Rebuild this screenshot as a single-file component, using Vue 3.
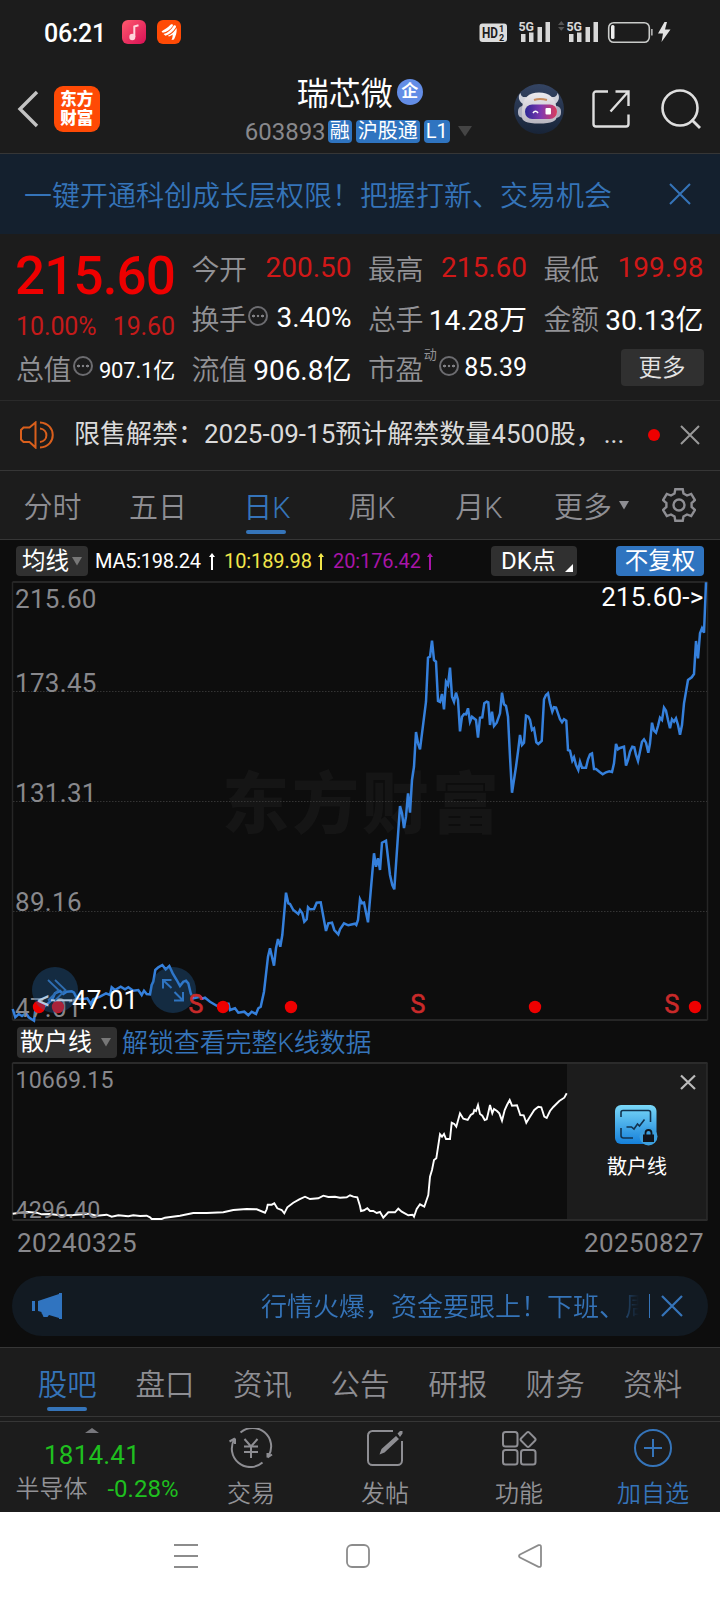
<script setup>
// Builds an SVG points string from coordinates in thirds of a pixel around an origin.
const trace = (ox, oy, coords) => {
  const out = []
  for (let i = 0; i < coords.length; i += 2) {
    out.push((ox + coords[i] / 3).toFixed(1) + ',' + (oy + coords[i + 1] / 3).toFixed(1))
  }
  return out.join(' ')
}

const price = [
  trace(0, 930, [38,237,46,262,56,252,66,258,78,250,86,262,102,272,106,240,120,222,135,228,150,215,158,205,165,190,180,183,190,192,200,185,215,184,222,188,230,205,245,208,262,205,272,222,280,208,300,200,318,190,330,195,335,172,345,180,362,170,375,178,385,172,400,182,415,180,425,195,432,182,440,192,450,193,455,165,460,155,466,120,475,112,487,105,497,118,508,108,518,130,530,150,540,168,550,155,558,152,565,160,572,190,580,205]),
  trace(200, 620, [0,1130,6,1136,15,1133,30,1145,50,1157,68,1165,82,1160,85,1148,90,1170,105,1165,115,1178,133,1175,145,1186,155,1175,168,1182,175,1165,182,1160,192,1115,204,1010,210,985,222,1037,228,985,234,957,241,980,247,945,258,818,265,850,270,852,280,870,295,882,300,870,307,880,313,905,320,898,324,862,330,868,342,867,350,848,362,847,378,933,385,910,396,908,403,930,415,943,420,928,432,910,445,916,465,911,469,915,474,900,480,838,486,850,492,848,504,907,522,700,528,740,534,715,540,750,546,668,558,662,570,765,577,795,583,808,600,558,606,580,612,624,618,590,624,520,630,578,636,480,642,440,648,336,654,370,660,388,678,245,684,113,690,110,696,62,702,120,708,125,714,243,720,246,726,222,732,268,738,185,744,195,750,143,756,230,762,245,768,218,774,240,780,334,786,290,792,282,798,283,804,265,810,305,816,290,828,300,834,353,840,293,847,292,853,250,860,245,865,247,870,315,876,275,882,318,890,308]),
  trace(440, 570, [180,430,186,368,192,403,198,408,204,440,210,560,216,668,228,590,234,545,240,495,246,525,252,518,258,437,265,440,270,450,276,480,282,475,289,517,295,522,305,513,312,388,318,375,324,370,330,400,337,425,342,412,348,413,360,448,366,457,372,448,379,452,384,540,390,542,397,572,402,562,408,585,415,600,420,575,426,593,438,593,444,568,450,553,456,550,462,597,468,597,480,607,488,613,498,607,508,604,516,606,522,580,528,522,534,538,540,534,552,530,558,587,564,570,570,545,577,530,583,532,588,555,594,573,606,515,612,508,618,518,625,548,630,520,636,458,642,482,648,488,654,468,660,443,666,450,672,413,678,422,684,450,690,475,696,448,702,455,708,445,714,465,720,494,726,465,732,400,744,330,755,322,762,312,768,213,774,265,780,190,786,175,792,188,798,37])
].join(' ')

const retail = [
  trace(0, 930, [38,851,60,848,85,846,110,848,125,853,150,852,180,856,220,855,265,851,290,857,320,854,335,860,355,856,385,859,400,856,420,858,440,857,450,862,455,867,485,867,495,863,540,857,580,849,620,849,670,847,700,840,740,837,770,838,795,848,800,838,803,824,815,824,823,820,832,835,845,840,853,850,862,832,880,818,898,808,915,800,930,807,955,805,970,797,985,801,1005,800,1020,803,1040,802,1050,796,1060,800,1072,802]),
  trace(360, 1030, [0,528,3,543,12,541,22,535,30,543,40,543,50,549,60,546,70,563,85,547,105,547,115,536,125,545,145,556,158,554,162,560,170,537,180,523,193,530,198,515,205,495,210,440,216,420,222,390,229,385,240,313,246,320,252,312,258,327,270,327,275,278,283,282,289,290,300,250,310,266,323,270,332,255,340,250,343,240,348,243,354,225,360,252,367,257,374,270,380,268,384,252,390,225,397,250,402,237,411,243,418,250,426,272,434,240,441,225,449,210,456,227,471,226,481,255,491,256,499,278,507,265,523,240,535,230,544,232,553,260,560,264,570,243,580,231,598,213,613,203,620,190])
].join(' ')

const scale = [
  { y: 607.5, t: '215.60' },
  { y: 692, t: '173.45' },
  { y: 802, t: '131.31' },
  { y: 911, t: '89.16' },
  { y: 1017, t: '47.01' }
]
const gridY = [691.5, 801.5, 911.5]
const events = [39, 58, 223, 291, 535, 695]
const signals = [196, 418, 672]
const sections = ['股吧', '盘口', '资讯', '公告', '研报', '财务', '资料']
</script>

<template>
  <div class="phone">
    <div class="status">
      <span class="clock">06:21</span>
      <svg class="app-a" width="24" height="24" viewBox="0 0 24 24">
        <defs><linearGradient id="music" x1="0" y1="0" x2="1" y2="1"><stop offset="0" stop-color="#ff5a6e" /><stop offset="1" stop-color="#d80f55" /></linearGradient></defs>
        <rect width="24" height="24" rx="6" fill="url(#music)" />
        <path d="M12.300 17V6.500l4.200-1.200" fill="none" stroke="#ffd5dc" stroke-width="2" />
        <ellipse cx="10.300" cy="17" rx="3" ry="3.200" fill="#ffd5dc" />
      </svg>
      <svg class="app-b" width="24" height="24" viewBox="0 0 24 24">
        <rect width="24" height="24" rx="6" fill="#ff4a05" />
        <path d="M4.500 11.500C7 9.500 11 8 13.500 4.800C15 3.800 16.500 4.500 15.800 6C13.500 9.500 9.500 12 5.800 12.800ZM6.500 14C10.500 13 14.500 10 16.800 5.500C18.500 4.800 19.500 6 18.800 7.500C16 12 12.500 14.500 8.500 15.800ZM11 15.800C14.500 14.500 17.500 11.500 19.500 8C20.300 12 18.500 16.500 17 19.500L14.500 20C15.500 18 15.800 16 15.500 14.500C14.500 15.600 13 16.300 11.800 16.600Z" fill="#fff" />
      </svg>
      <svg class="signals" width="200" height="30" viewBox="476 16 200 30">
        <rect x="479.500" y="23.500" width="27.500" height="18.500" rx="3" fill="#dcdcdc" />
        <text x="482" y="38" class="hd" textLength="16" lengthAdjust="spacingAndGlyphs">HD</text>
        <text x="499" y="32" class="hd-n">1</text><text x="499" y="41" class="hd-n">2</text>
        <g v-for="dx in [0, 48]" :key="dx" :transform="`translate(${dx} 0)`">
          <text x="518.500" y="31" class="g5" textLength="15.500" lengthAdjust="spacingAndGlyphs">5G</text>
          <path d="M521 34h4.500v8h-4.500zM529 32.500h4.500v9.500h-4.500zM537.500 27h4.500v15h-4.500zM545.500 22h4.500v20h-4.500z" fill="#d8d8d8" />
        </g>
        <path d="M558 25l3.300-4 3.300 4zM558 27l3.300 3.700 3.300-3.700z" fill="#555" />
        <rect x="608.700" y="22.700" width="40.600" height="19.600" rx="5" fill="none" stroke="#c9cbc9" stroke-width="1.600" />
        <rect x="611" y="25" width="3.500" height="14" rx="1.500" fill="#eee" />
        <rect x="651" y="29" width="1.700" height="6.500" fill="#aaa" />
        <path d="M664.500 22L658 33.500h5l-1.500 8.500 9-12.500h-5.500l2-7.500z" fill="#e2e2e2" />
      </svg>
    </div>

    <header class="header">
      <svg class="back" width="24" height="40" viewBox="0 0 24 40"><path d="M21 3L4 20l17 17" fill="none" stroke="#c2c2c2" stroke-width="3.400" /></svg>
      <div class="logo"><span>东方</span><span>财富</span></div>
      <div class="stock">
        <div class="name">瑞芯微<span class="corp">企</span></div>
        <div class="code">
          <span class="num">603893</span>
          <b class="rong">融</b><b class="hgt">沪股通</b><b class="lv">L1</b>
          <svg width="14" height="11" viewBox="0 0 14 11"><path d="M0 0h14L7 10.500z" fill="#444" /></svg>
        </div>
      </div>
      <svg class="robot" width="50" height="50" viewBox="0 0 50 50">
        <defs>
          <linearGradient id="disc" x1="0" y1="0" x2="0" y2="1"><stop offset="0" stop-color="#344463" /><stop offset="1" stop-color="#182438" /></linearGradient>
          <linearGradient id="visor"><stop offset="0" stop-color="#2b2794" /><stop offset=".5" stop-color="#8038b0" /><stop offset="1" stop-color="#dc3d5b" /></linearGradient>
          <linearGradient id="helmet" x1="0" y1="0" x2="0" y2="1"><stop offset="0" stop-color="#eceaee" /><stop offset="1" stop-color="#b9b6c0" /></linearGradient>
        </defs>
        <circle cx="25" cy="25" r="25" fill="url(#disc)" />
        <path d="M9 20C4 17 4 11 6.500 9C7 12.500 9 13.500 13 13ZM41 20C46 17 45.500 11 43.500 9C43 12.500 40 13.500 37 13Z" fill="#cfd1da" />
        <rect x="4" y="22" width="43" height="12" rx="5" fill="#aeb0bf" />
        <path d="M8 26C8 14 15 8.500 25 8.500S42.500 14 42.500 26V33C42.500 37 38 39.500 25 39.500S8 37 8 33Z" fill="url(#helmet)" />
        <rect x="11" y="20.500" width="32" height="14.500" rx="7.200" fill="url(#visor)" />
        <path d="M19 29q2.500-3.500 5 0" fill="none" stroke="#fff" stroke-width="1.600" />
        <rect x="31.500" y="24" width="5.500" height="6.500" rx="1" fill="#fff" />
        <path d="M20 16q6-2 13 0" stroke="#c88a5c" stroke-width="2" fill="none" />
      </svg>
      <svg class="share" width="40" height="40" viewBox="0 0 40 40"><path d="M17 2.500H5a2.500 2.500 0 0 0-2.500 2.500v30A2.500 2.500 0 0 0 5 37.500h30a2.500 2.500 0 0 0 2.500-2.500V25.500M24.500 2.500h13v14.500M37 3L19.500 22.500" fill="none" stroke="#dedede" stroke-width="2.400" /></svg>
      <svg class="search" width="42" height="42" viewBox="0 0 42 42"><circle cx="20" cy="20" r="17.500" fill="none" stroke="#dedede" stroke-width="2.600" /><path d="M31.500 31.500L40 40" stroke="#dedede" stroke-width="2.800" /></svg>
    </header>

    <div class="promo">
      <span>一键开通科创成长层权限！把握打新、交易机会</span>
      <svg width="22" height="22" viewBox="0 0 22 22"><path d="M1 1l20 20M21 1L1 21" stroke="#3574b9" stroke-width="2" /></svg>
    </div>

    <section class="quote">
      <div class="col first">
        <div class="price">215.60</div>
        <div class="delta"><span>10.00%</span><span>19.60</span></div>
        <div class="cell"><label>总值</label><i class="dots"></i><span class="val xs">907.1亿</span></div>
      </div>
      <div class="col">
        <div class="cell"><label>今开</label><span class="val up">200.50</span></div>
        <div class="cell"><label>换手</label><i class="dots"></i><span class="val">3.40%</span></div>
        <div class="cell"><label>流值</label><span class="val">906.8亿</span></div>
      </div>
      <div class="col">
        <div class="cell"><label>最高</label><span class="val up">215.60</span></div>
        <div class="cell"><label>总手</label><span class="val">14.28万</span></div>
        <div class="cell"><label>市盈</label><sup>动</sup><i class="dots"></i><span class="val sm">85.39</span></div>
      </div>
      <div class="col">
        <div class="cell"><label>最低</label><span class="val up">199.98</span></div>
        <div class="cell"><label>金额</label><span class="val">30.13亿</span></div>
        <div class="cell end"><button class="more">更多</button></div>
      </div>
    </section>

    <div class="notice">
      <svg width="34" height="28" viewBox="0 0 34 28" fill="none" stroke="#d95f1c" stroke-width="2"><path d="M15.500 1.500v25L9.500 21H3.500L1 18.500V9L3.500 6.500h6zM20 1.500c17 1 17 24 0 25M20 7.500c8.500 1 8.500 12.500 0 13.500" /></svg>
      <span class="txt">限售解禁：2025-09-15预计解禁数量4500股，<em>...</em></span>
      <span class="red"></span>
      <svg class="x" width="20" height="20" viewBox="0 0 20 20"><path d="M1 1l18 18M19 1L1 19" stroke="#999" stroke-width="2" /></svg>
    </div>

    <nav class="periods">
      <span>分时</span><span>五日</span><span class="on">日K</span><span>周K</span><span>月K</span>
      <span>更多<svg class="tri" width="10" height="9" viewBox="0 0 10 9"><path d="M0 0h10L5 8.500z" fill="#8e8e93" /></svg></span>
      <span><svg width="34" height="34" viewBox="-17 -17 34 34" fill="none" stroke="#8e8e93" stroke-width="2.400"><path d="M-3.700-15.700h7.400l.8 4.200 3.500 2 4.200-1.600 3.700 6.200-3.300 2.900v4l3.300 2.900-3.700 6.200-4.200-1.600-3.500 2-.8 4.200h-7.400l-.8-4.200-3.500-2-4.200 1.600-3.700-6.200 3.300-2.900v-4l-3.300-2.900 3.700-6.200 4.200 1.600 3.500-2z" /><circle r="5.500" /></svg></span>
    </nav>

    <main class="board">
      <div class="legend">
        <span class="chip ma">均线<svg width="10" height="9" viewBox="0 0 10 9"><path d="M0 0h10L5 8.500z" fill="#777" /></svg></span>
        <span class="m5">MA5:198.24</span>
        <svg class="ar" width="6" height="17" viewBox="0 0 6 17"><path d="M3 0L6 4H4v13H2V4H0z" fill="#fff" /></svg>
        <span class="m10">10:189.98</span>
        <svg class="ar" width="6" height="17" viewBox="0 0 6 17"><path d="M3 0L6 4H4v13H2V4H0z" fill="#f2e64a" /></svg>
        <span class="m20">20:176.42</span>
        <svg class="ar" width="6" height="17" viewBox="0 0 6 17"><path d="M3 0L6 4H4v13H2V4H0z" fill="#a815a8" /></svg>
        <span class="chip dk">DK点<svg width="8" height="8" viewBox="0 0 8 8"><path d="M8 0v8H0z" fill="#fff" /></svg></span>
        <span class="chip fq">不复权</span>
      </div>

      <svg class="plot" width="720" height="446" viewBox="0 578 720 446">
        <text x="222" y="828" class="mark" textLength="277">东方财富</text>
        <path d="M12.500 582H707.500M12.500 1020H707.500" stroke="#262626" stroke-width="2" />
        <path d="M12.500 582V1020M707.500 582V1020" stroke="#262626" stroke-width="1.500" />
        <path v-for="y in gridY" :key="y" :d="`M13 ${y}H707`" stroke="#343434" stroke-dasharray="1.500 1.500" />
        <polyline :points="price" fill="none" stroke="#3580dc" stroke-width="2.500" />
        <text v-for="s in scale" :key="s.t" x="15" :y="s.y" class="axis">{{ s.t }}</text>
        <text x="703.500" y="606" class="tag" text-anchor="end">215.60-&gt;</text>
        <circle v-for="x in events" :key="x" :cx="x" cy="1007" r="6.200" fill="#ee0000" />
        <text x="37" y="1008.500" class="tag">&lt;</text>
        <path d="M51 1000.300h21" stroke="#fff" stroke-width="2" />
        <text x="72" y="1008.500" class="tag">47.01</text>
        <circle cx="55" cy="990" r="23" fill="#2466a6" fill-opacity=".34" />
        <circle cx="173" cy="990" r="23" fill="#2466a6" fill-opacity=".34" />
        <path d="M48 980l10.500 10L48 1000.500M55 980l10.500 10L55 1000.500" fill="none" stroke="#2f6db0" stroke-width="1.800" />
        <path d="M163 988.500V980h8.500M163.500 980.500l8 7.500M183 992v8.500h-9M182.500 1000l-8-8" fill="none" stroke="#2f74c0" stroke-width="2" />
        <text v-for="x in signals" :key="x" :x="x" y="1012.500" class="sig" text-anchor="middle">S</text>
      </svg>

      <div class="sub-legend">
        <span class="chip">散户线<svg width="10" height="9" viewBox="0 0 10 9"><path d="M0 0h10L5 8.500z" fill="#777" /></svg></span>
        <span class="unlock">解锁查看完整K线数据</span>
      </div>

      <svg class="plot" width="720" height="164" viewBox="0 1060 720 164">
        <rect x="567" y="1063" width="140" height="157" fill="#1c1c1c" />
        <path d="M12.500 1063H707.500M12.500 1220H707.500" stroke="#2b2b2b" stroke-width="2" />
        <path d="M12.500 1063V1220M707 1063V1220" stroke="#2b2b2b" stroke-width="1.500" />
        <polyline :points="retail" fill="none" stroke="#fff" stroke-width="1.900" />
        <text x="15.500" y="1087.700" class="axis s">10669.15</text>
        <text x="15.500" y="1217.700" class="axis s">4296.40</text>
        <path d="M681 1075.500l14 13.500M695 1075.500L681 1089" stroke="#bbb" stroke-width="2.200" />
        <defs><linearGradient id="tile" x1="0" y1="0" x2="0" y2="1"><stop offset="0" stop-color="#7ad8f8" /><stop offset="1" stop-color="#1580da" /></linearGradient></defs>
        <rect x="615" y="1105" width="41.500" height="39" rx="6" fill="url(#tile)" />
        <path d="M621 1117v-4.500a2 2 0 0 1 2-2h25.500a2 2 0 0 1 2 2V1122M621 1128v7.500a2.500 2.500 0 0 0 2.500 2.500H633M626.500 1127h5l2.500 2 3.500-5 2 2 5-6.500" fill="none" stroke="#12334f" stroke-width="1.600" />
        <circle cx="648.500" cy="1136.500" r="9" fill="#3c9fdd" />
        <path d="M643 1134.500h11v7.500h-11z" fill="#10151c" />
        <path d="M645.500 1135v-2a3 3 0 0 1 6 0v2" fill="none" stroke="#10151c" stroke-width="1.800" />
        <text x="637" y="1174" class="lock" text-anchor="middle">散户线</text>
      </svg>

      <div class="dates"><span>20240325</span><span>20250827</span></div>

      <div class="ticker">
        <svg width="30" height="26" viewBox="0 0 30 26"><path d="M0 8h3v10H0zM6 8L27 1V0h3v26h-3v-1l-10-3-1.500 2h-4L10 20.500H9.500V19L6 18z" fill="#3074c0" /></svg>
        <span class="msg">行情火爆，资金要跟上！下班、周</span>
        <i class="bar"></i>
        <svg class="x" width="22" height="22" viewBox="0 0 22 22"><path d="M1 1l20 20M21 1L1 21" stroke="#3574b9" stroke-width="2.200" /></svg>
      </div>
    </main>

    <nav class="sections">
      <span v-for="(s, i) in sections" :key="s" :class="{ on: i === 0 }">{{ s }}</span>
    </nav>

    <footer class="actions">
      <div class="index">
        <svg width="14" height="5" viewBox="0 0 14 5"><path d="M0 5l7-5 7 5z" fill="#77777c" /></svg>
        <div class="pts">1814.41</div>
        <div class="ind"><span>半导体</span><b>-0.28%</b></div>
      </div>
      <div class="act">
        <svg width="44" height="40" viewBox="-22 -20 44 40" fill="none" stroke="#8e8e93" stroke-width="2"><path d="M-10.500-15.500A18.500 18.500 0 0 1 17.500 8M16.500 9.500l4.500-3M16.500 9.500V5M11.500 14.500A18.500 18.500 0 0 1-16.500-9M-16-9.500l-5.500 3M-16-9.500V-4" /><path d="M-6.500-9L0-1.500 6.500-9M0-1.500V10M-7-1.500H7M-7 4H7" /></svg>
        <span>交易</span>
      </div>
      <div class="act">
        <svg width="40" height="40" viewBox="-20 -20 40 40" fill="none" stroke="#8e8e93" stroke-width="2"><path d="M8-17H-12.500A4.500 4.500 0 0 0-17-12.500V12.500A4.500 4.500 0 0 0-12.500 17H12.500A4.500 4.500 0 0 0 17 12.500V-7" /><path d="M-5.500 6.500l2-5.500L11-12l3 3L-.5 4.500zM12.500-14.500l2.500-2.500h2.500v2.500L15-11z" fill="#8e8e93" stroke="none" /></svg>
        <span>发帖</span>
      </div>
      <div class="act">
        <svg width="40" height="40" viewBox="-20 -20 40 40" fill="none" stroke="#8e8e93" stroke-width="2"><rect x="-16" y="-16" width="14.500" height="14.500" rx="2.500" /><rect x="-16" y="2" width="14.500" height="14.500" rx="2.500" /><rect x="2" y="2" width="14.500" height="14.500" rx="2.500" /><rect x="3.300" y="-14.300" width="11.500" height="11.500" rx="1.800" transform="rotate(45 9 -8.500)" /></svg>
        <span>功能</span>
      </div>
      <div class="act blue">
        <svg width="40" height="40" viewBox="-20 -20 40 40" fill="none" stroke="#3574b9" stroke-width="2"><circle r="18" /><path d="M-9 0H9M0-9V9" /></svg>
        <span>加自选</span>
      </div>
    </footer>

    <div class="system">
      <svg width="24" height="24" viewBox="0 0 24 24"><path d="M0 1h24M0 12h24M0 23h24" stroke="#8c8c8c" stroke-width="2" /></svg>
      <svg width="24" height="24" viewBox="0 0 24 24"><rect x="1" y="1" width="22" height="22" rx="5" fill="none" stroke="#8c8c8c" stroke-width="1.800" /></svg>
      <svg width="24" height="24" viewBox="0 0 24 24"><path d="M2 10.500L20.500 1.200Q23 .5 23 3v18q0 2.500-2.500 1.800L2 13.500q-2-1.500 0-3z" fill="none" stroke="#8c8c8c" stroke-width="1.800" /></svg>
    </div>
  </div>
</template>

<style>
body { margin: 0; background: #1c1c1c; }
</style>

<style scoped>
.phone { width: 720px; height: 1600px; overflow: hidden; background: #1c1c1c; color: #fff; font-family: Roboto, "Noto Sans CJK SC", sans-serif; display: flex; flex-direction: column; white-space: nowrap; }
.phone > * { box-sizing: border-box; flex: none; }
svg { display: block; flex: none; }
i, em { font-style: normal; }

.status { height: 64px; display: flex; align-items: center; padding-left: 44px; }
.clock { width: 78px; font-size: 25px; font-weight: 500; letter-spacing: -.3px; line-height: 64px; padding-top: 2px; box-sizing: border-box; height: 64px; }
.app-b { margin-left: 11px; }
.signals { margin: -2px 0 0 295px; }
.hd { font: 700 14px Roboto; fill: #1c1c1c; }
.hd-n { font: 700 9px Roboto; fill: #1c1c1c; }
.g5 { font: 700 13px Roboto; fill: #d8d8d8; }

.header { height: 90px; border-bottom: 1px solid #363636; display: flex; align-items: center; padding: 0 18px 0 16px; }
.logo { width: 46px; height: 46px; border-radius: 9px; background: #ff4a05; margin-left: 14px; display: flex; flex-direction: column; align-items: center; justify-content: center; padding-top: 1px; box-sizing: border-box; }
.logo span { font-size: 16.500px; line-height: 19.500px; font-weight: 900; }
.stock { margin-left: 145px; width: 230px; height: 76px; padding-top: 6px; display: flex; flex-direction: column; }
.name { display: flex; align-items: center; height: 40px; font-size: 32px; line-height: 40px; padding-left: 52px; }
.corp { width: 26px; height: 26px; border-radius: 50%; background: #638de6; font-size: 17px; line-height: 25px; font-weight: 700; text-align: center; margin: -3px 0 0 4px; }
.code { display: flex; align-items: center; height: 36px; gap: 4px; }
.code .num { font-size: 24px; color: #88888c; width: 79px; }
.code b { height: 23px; line-height: 22px; border-radius: 4px; background: #2f74c0; font-size: 20px; font-weight: 400; text-align: center; }
.rong { width: 24px; }
.hgt { width: 64px; }
.lv { width: 26px; }
.code svg { margin-left: 4px; }
.robot { margin-left: 41px; }
.share { margin-left: 27px; }
.search { margin-left: 29px; }

.promo { height: 80px; background: #14202e; color: #3574b9; display: flex; align-items: center; justify-content: space-between; padding: 0 29px 0 24px; font-size: 28px; font-weight: 350; }
.promo span { line-height: 74px; padding-top: 6px; }

.quote { height: 167px; border-bottom: 1px solid #2a2a2a; display: grid; grid-template-columns: 159px 160px 159px 160px; column-gap: 16.500px; padding: 8.500px 0 0 16px; }
.cell { height: 50px; display: flex; align-items: center; }
.cell label { font-size: 28px; font-weight: 350; color: #929296; letter-spacing: -.6px; }
.val { font-size: 28px; margin-left: auto; }
.val.up { color: #d01818; }
.val.xs { font-size: 22px; letter-spacing: -.2px; }
.val.sm { font-size: 25px; }
.dots { box-sizing: border-box; width: 20px; height: 20px; border: 2px solid #6c6c70; border-radius: 50%; margin: -4px 0 0 2px; background: radial-gradient(circle at 3.500px 8px, #808084 1.300px, transparent 1.600px), radial-gradient(circle at 8px 8px, #808084 1.300px, transparent 1.600px), radial-gradient(circle at 12.500px 8px, #808084 1.300px, transparent 1.600px); }
sup { font-size: 13px; line-height: 14px; color: #929296; margin: -25px 0 0 1px; }
.price { font-size: 53px; font-weight: 500; line-height: 66px; color: #ee0000; margin-left: -1px; letter-spacing: -.9px; }
.delta { display: flex; justify-content: space-between; height: 34px; line-height: 36px; font-size: 25px; letter-spacing: -.1px; color: #c41a1a; }
.end { justify-content: flex-end; }
.more { width: 83px; height: 37px; margin: 0; padding: 2px 0 0; border: 0; border-radius: 4px; background: #303030; color: #e4e4e4; font: 350 23.500px/33px Roboto, "Noto Sans CJK SC", sans-serif; }

.notice { height: 70px; border-bottom: 1px solid #363636; display: flex; align-items: center; padding: 0 20px 0 20px; }
.notice > svg:first-child { margin-top: -2px; }
.txt { margin-left: 20px; width: 574px; font-size: 26px; line-height: 67px; height: 70px; color: #dadada; }
.txt em { margin-left: 2px; }
.red { width: 12px; height: 12px; border-radius: 50%; background: #ee0000; margin-top: -1px; }
.notice .x { margin: -1px 0 0 20px; }

.periods { height: 69px; border-bottom: 1px solid #363636; display: grid; grid-template-columns: 105px 106px 112px 98px 116px 109px 66px; font-size: 29px; font-weight: 350; color: #8e8e93; }
.periods span { position: relative; display: flex; align-items: center; justify-content: center; }
.periods .on, .sections .on { color: #3574b9; }
.periods .on::after, .sections .on::after { content: ""; position: absolute; bottom: 5px; width: 40px; height: 4px; border-radius: 2px; background: #3574b9; }
.periods .on::after { margin-right: 2px; }
.periods .tri { margin-left: 7px; }

.board { height: 807px; background: #0d0d0d; }
.legend { height: 38px; display: flex; align-items: center; padding: 4px 16px 0 16px; box-sizing: border-box; font-size: 20px; }
.chip { display: flex; align-items: center; height: 30px; line-height: 30px; border-radius: 4px; background: #303030; font-size: 24px; box-sizing: border-box; }
.ma { width: 72px; padding-left: 6px; font-size: 23.500px; }
.ma svg { margin-left: 3px; }
.m5 { width: 108px; margin-left: 7px; letter-spacing: -.25px; }
.ar + span { margin-left: 9px; }
.m5 + .ar { margin-left: 6px; }
.m10 { color: #f2e64a; width: 89px; letter-spacing: -.1px; }
.m20 { color: #a815a8; width: 89px; letter-spacing: -.1px; }
.m10 + .ar, .m20 + .ar { margin-left: 5px; }
.ar + .m20 { margin-left: 9px; }
.ar + .dk { margin-left: 58px; }
.dk { width: 86px; padding-left: 10px; font-size: 24px; }
.dk svg { margin: 14px 0 0 9px; }
.fq { width: 88px; margin-left: auto; justify-content: center; background: #2f74c0; font-size: 23.500px; }
.axis { font: 26px Roboto; fill: #88888c; letter-spacing: .3px; }
.axis.s { font-size: 23.200px; letter-spacing: .1px; }
.tag { font: 26px Roboto; fill: #fff; letter-spacing: .2px; }
.sig { font: 25px Roboto; fill: #c92a2a; stroke: #c92a2a; stroke-width: .6px; }
.mark { font: 900 67px "Noto Sans CJK SC"; fill: #151515; }
.lock { font: 20px "Noto Sans CJK SC"; fill: #fff; }
.sub-legend { height: 36px; display: flex; align-items: center; padding-left: 17px; }
.sub-legend .chip { width: 100px; height: 31px; padding-left: 3px; line-height: 31px; }
.sub-legend .chip svg { margin-left: 9px; }
.unlock { margin-left: 5px; font-size: 26px; font-weight: 350; color: #3574b9; line-height: 34px; padding-top: 2px; letter-spacing: -.1px; }
.dates { height: 52px; display: flex; justify-content: space-between; padding: 0 16px 0 17px; font-size: 26px; line-height: 38px; color: #88888c; letter-spacing: .4px; box-sizing: border-box; }
.ticker { width: 696px; height: 60px; margin-left: 12px; box-sizing: border-box; border-radius: 30px; background: #121a22; display: flex; align-items: center; padding-left: 20px; }
.msg { margin-left: 199px; width: 379px; overflow: hidden; font-size: 26px; font-weight: 350; line-height: 58px; padding-top: 2px; color: #3574b9; -webkit-mask-image: linear-gradient(90deg, #000 350px, transparent 378px); mask-image: linear-gradient(90deg, #000 350px, transparent 378px); }
.bar { width: 1px; height: 24px; background: #3574b9; margin-left: 9px; }
.ticker .x { margin-left: 11px; }

.sections { height: 70px; border-top: 1px solid #363636; border-bottom: 1px solid #363636; display: grid; grid-template-columns: repeat(7, 97.600px); padding-left: 18.500px; font-size: 29.500px; font-weight: 350; color: #8e8e93; }
.sections span { position: relative; display: flex; align-items: center; justify-content: center; padding-top: 0; }

.actions { margin-top: 4px; height: 91px; border-top: 1px solid #363636; display: grid; grid-template-columns: 184px 134px 134px 134px 134px; }
.index { display: flex; flex-direction: column; align-items: center; padding-top: 6px; }
.pts { font-size: 26px; line-height: 34px; margin-top: 5px; color: #1fbf1f; letter-spacing: .2px; }
.ind { display: flex; width: 163px; justify-content: space-between; margin: 1px 0 0 10px; font-size: 24px; line-height: 32px; font-weight: 350; color: #929296; }
.ind b { font-weight: 400; color: #1fbf1f; }
.act { display: flex; flex-direction: column; align-items: center; padding-top: 6px; font-size: 24px; font-weight: 350; color: #929296; }
.act svg { height: 40px; }
.act span { line-height: 34px; margin-top: 9px; }
.blue { color: #3574b9; }

.system { height: 88px; background: #fff; display: flex; align-items: center; justify-content: center; gap: 148px; padding: 0 4px 1px 0; }
</style>
